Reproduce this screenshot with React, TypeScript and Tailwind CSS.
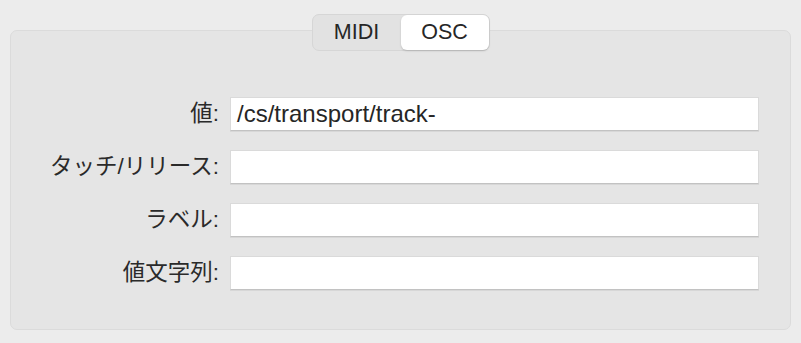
import React from "react";

const font = { fontFamily: '"Liberation Sans", "Noto Sans CJK JP", sans-serif' };

type Row = { label: string; value: string };

const rows: Row[] = [
    { label: "値:", value: "/cs/transport/track-" },
    { label: "タッチ/リリース:", value: "" },
    { label: "ラベル:", value: "" },
    { label: "値文字列:", value: "" },
];

const Segmented = () => (
    <div className="absolute left-1/2 top-[-17px] -translate-x-1/2 flex h-[37px] w-[178px] rounded-[7px] border border-[#d6d6d6] bg-[#e2e2e2]">
        <div className="flex w-[88px] items-center justify-center text-[21.5px] text-[#262626]">
            MIDI
        </div>
        <div className="flex flex-1 items-center justify-center rounded-[6px] bg-white text-[21.5px] text-[#262626] shadow-[0_1px_2px_rgba(0,0,0,0.18)]">
            OSC
        </div>
    </div>
);

export default function App() {
    return (
        <div
            className="h-[343px] w-[801px] bg-[#ececec] px-[10px] pt-[30px]"
            style={font}>
            <div className="relative h-[300px] rounded-[7px] border border-[#dbdbdb] bg-[#e5e5e5] pt-[66px]">
                <Segmented />
                <div className="flex flex-col gap-[19px]">
                    {rows.map((row) => (
                        <div key={row.label} className="flex h-[34px] items-center">
                            <span className="w-[208px] text-right text-[22.5px] text-[#2a2a2a]">
                                {row.label}
                            </span>
                            <div className="ml-[11px] flex h-[34px] w-[529px] items-center border border-[#dadada] border-b-[#c2c2c2] bg-white pl-[6px] text-[24px] text-[#262626] shadow-[0_1px_0_rgba(0,0,0,0.06)]">
                                {row.value}
                            </div>
                        </div>
                    ))}
                </div>
            </div>
        </div>
    );
}
